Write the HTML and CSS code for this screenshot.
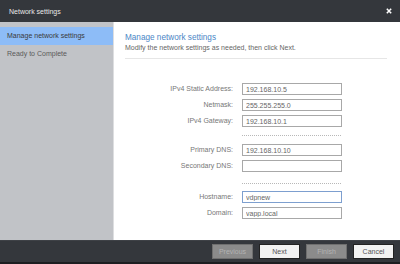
FILE: index.html
```html
<!DOCTYPE html>
<html lang="en">
<head>
    <meta charset="UTF-8">
    <title>Network settings</title>
    <link rel="stylesheet" href="styles.css">
</head>
<body>
    <div class="dialog">
        <!-- Title bar -->
        <div class="titlebar">
            <span class="title">Network settings</span>
            <svg class="close" width="6" height="6" viewBox="0 0 6 6">
                <path d="M0.8 0.8 L5.2 5.2 M5.2 0.8 L0.8 5.2" stroke="#fff" stroke-width="1.5"/>
            </svg>
        </div>
        <div class="body">
            <!-- Steps -->
            <ul class="steps">
                <li class="step active">Manage network settings</li>
                <li class="step">Ready to Complete</li>
            </ul>
            <!-- Page -->
            <div class="page">
                <h2 class="page-title">Manage network settings</h2>
                <p class="page-desc">Modify the network settings as needed, then click Next.</p>
                <div class="form">
                    <div class="group">
                        <label>IPv4 Static Address:</label>
                        <input type="text" value="192.168.10.5">
                        <label>Netmask:</label>
                        <input type="text" value="255.255.255.0">
                        <label>IPv4 Gateway:</label>
                        <input type="text" value="192.168.10.1">
                    </div>
                    <div class="sep"></div>
                    <div class="group">
                        <label>Primary DNS:</label>
                        <input type="text" value="192.168.10.10">
                        <label>Secondary DNS:</label>
                        <input type="text" value="">
                    </div>
                    <div class="sep sep-2"></div>
                    <div class="group">
                        <label>Hostname:</label>
                        <input type="text" class="focused" value="vdpnew">
                        <label>Domain:</label>
                        <input type="text" value="vapp.local">
                    </div>
                </div>
            </div>
        </div>
        <!-- Buttons -->
        <div class="footer">
            <button class="btn" disabled>Previous</button>
            <button class="btn">Next</button>
            <button class="btn" disabled>Finish</button>
            <button class="btn">Cancel</button>
        </div>
        <div class="edge"></div>
    </div>
</body>
</html>
```

FILE: styles.css
```css
body {
    margin: 0;
    padding: 0;
    font-family: "Liberation Sans", Arial, sans-serif;
    font-size: 7px;
    background: #fff;
}
.dialog {
    width: 400px;
    height: 264px;
    display: flex;
    flex-direction: column;
    overflow: hidden;
}
.titlebar {
    height: 22px;
    flex-shrink: 0;
    background: #34373c;
    color: #e8e8e8;
    display: flex;
    align-items: center;
    justify-content: space-between;
    padding: 0 8px 0 9px;
}
.title {
    font-size: 7px;
}
.close {
    display: block;
    margin-top: -1px;
}
.body {
    flex-grow: 1;
    display: flex;
    min-height: 0;
}
.steps {
    list-style: none;
    margin: 0;
    padding: 5px 0 0 0;
    width: 113px;
    background: #c1c3c7;
    border-right: 1px solid #dddee0;
}
.step {
    height: 18px;
    line-height: 18px;
    padding-left: 7px;
    color: #5a5a5a;
}
.step.active {
    background: #8dbcf7;
    color: #3a3a3a;
}
.page {
    flex-grow: 1;
    padding: 11px 13px 0 11px;
}
.page-title {
    margin: 0;
    font-size: 8.2px;
    line-height: 10px;
    font-weight: normal;
    color: #4a86c6;
}
.page-desc {
    margin: 0;
    font-size: 7px;
    line-height: 9px;
    color: #666;
    padding-bottom: 6px;
    border-bottom: 1px solid #e6e6e6;
}
.form {
    display: flex;
    flex-direction: column;
    margin-top: 24px;
}
.group {
    display: grid;
    grid-template-columns: 108px 100px;
    column-gap: 9px;
    row-gap: 4px;
}
.group label {
    text-align: right;
    line-height: 12px;
    color: #777;
}
.group input {
    box-sizing: border-box;
    height: 12px;
    width: 100px;
    margin: 0;
    padding: 0 3px;
    border: 1px solid #a8a8a8;
    font-family: "Liberation Sans", Arial, sans-serif;
    font-size: 7px;
    color: #666;
    background: #fff;
    outline: none;
}
.group input.focused {
    border-color: #7d9fcf;
}
.sep {
    margin: 8px 0 8px 117px;
    width: 99px;
    border-top: 1px dotted #b8b8b8;
}
.sep-2 {
    margin: 11px 0 7px 117px;
}
.footer {
    height: 22px;
    flex-shrink: 0;
    background: #34373c;
    border-top: 1px solid #3e4146;
    box-sizing: border-box;
    display: flex;
    justify-content: flex-end;
    align-items: flex-start;
    gap: 6px;
    padding: 3px 6px 0 0;
}
.btn {
    width: 41px;
    height: 15px;
    margin: 0;
    padding: 0;
    border: 1px solid #222;
    background: #f2f2f2;
    color: #555;
    font-family: "Liberation Sans", Arial, sans-serif;
    font-size: 7px;
}
.btn:disabled {
    background: #8b8b8b;
    border-color: #6f6f6f;
    color: #b3b3b3;
}
.edge {
    height: 2px;
    flex-shrink: 0;
    background: #1d1e21;
}
```
